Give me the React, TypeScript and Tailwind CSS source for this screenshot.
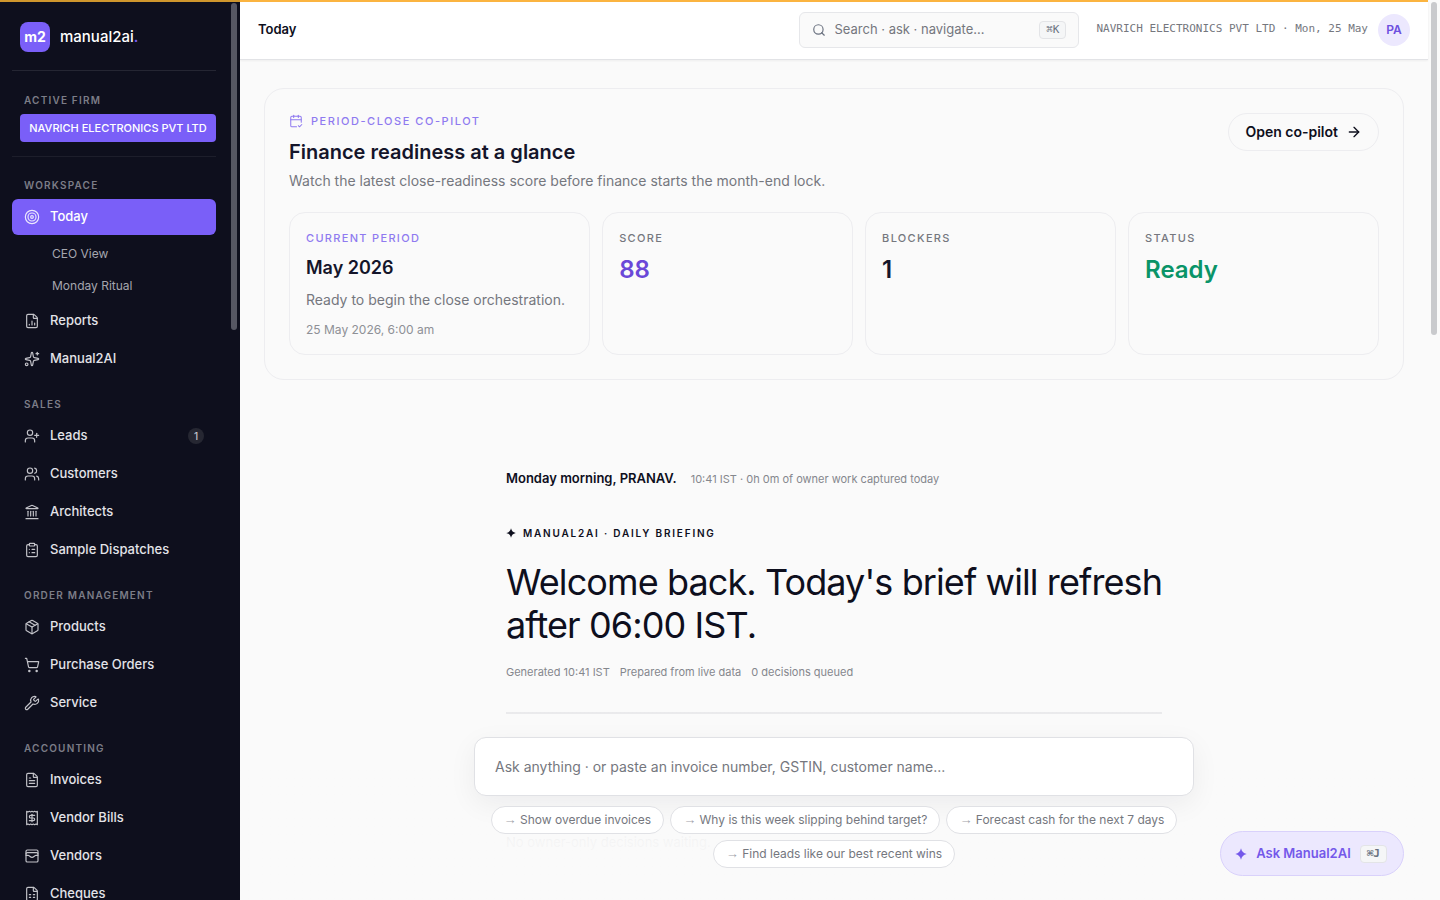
import { type ReactNode } from 'react';
import {
  ArrowRight,
  CalendarCheck2,
  ClipboardList,
  FileChartColumn,
  FileSpreadsheet,
  FileText,
  Landmark,
  Package,
  Receipt,
  Search,
  ShoppingCart,
  Sparkles,
  Target,
  UserPlus,
  Users,
  WalletCards,
  Wrench,
  type LucideIcon,
} from 'lucide-react';

type NavItem = {
  label: string;
  icon: LucideIcon;
  active?: boolean;
  badge?: number;
  children?: string[];
};

const NAV: { title: string; items: NavItem[] }[] = [
  {
    title: 'Workspace',
    items: [
      { label: 'Today', icon: Target, active: true, children: ['CEO View', 'Monday Ritual'] },
      { label: 'Reports', icon: FileChartColumn },
      { label: 'Manual2AI', icon: Sparkles },
    ],
  },
  {
    title: 'Sales',
    items: [
      { label: 'Leads', icon: UserPlus, badge: 1 },
      { label: 'Customers', icon: Users },
      { label: 'Architects', icon: Landmark },
      { label: 'Sample Dispatches', icon: ClipboardList },
    ],
  },
  {
    title: 'Order management',
    items: [
      { label: 'Products', icon: Package },
      { label: 'Purchase Orders', icon: ShoppingCart },
      { label: 'Service', icon: Wrench },
    ],
  },
  {
    title: 'Accounting',
    items: [
      { label: 'Invoices', icon: FileText },
      { label: 'Vendor Bills', icon: Receipt },
      { label: 'Vendors', icon: WalletCards },
      { label: 'Cheques', icon: FileSpreadsheet },
    ],
  },
];

const SUGGESTIONS = [
  'Show overdue invoices',
  'Why is this week slipping behind target?',
  'Forecast cash for the next 7 days',
  'Find leads like our best recent wins',
];

function Spark({ className }: { className?: string }) {
  return (
    <svg viewBox="0 0 12 12" fill="currentColor" className={className}>
      <path d="M6 0.300C6.800 3.600 8.400 5.200 11.700 6C8.400 6.800 6.800 8.400 6 11.700C5.200 8.400 3.600 6.800 0.300 6C3.600 5.200 5.200 3.600 6 0.300Z" />
    </svg>
  );
}

function Kbd({ children }: { children: ReactNode }) {
  return (
    <kbd className="rounded border border-[#e3e4e7] bg-[#f5f6f7] px-1.5 font-['DejaVu_Sans_Mono',monospace] text-[11px] leading-4 text-[#6b7280]">
      {children}
    </kbd>
  );
}

function NavLink({ item }: { item: NavItem }) {
  const Icon = item.icon;
  return (
    <li>
      <a
        href="#"
        className={`flex h-9 items-center gap-2.5 rounded-md px-3 text-[13px] font-medium ${
          item.active ? 'bg-[#7a5ff8] text-white' : 'text-[#e3e3e8]'
        }`}
      >
        <Icon className="size-4 shrink-0 opacity-85" strokeWidth={1.75} />
        {item.label}
        {item.badge && (
          <span className="ml-auto flex size-4 items-center justify-center rounded-full bg-[#262732] text-[10px] text-[#c4c4cc]">
            {item.badge}
          </span>
        )}
      </a>
      {item.children && (
        <ul className="mt-1 flex flex-col gap-0.5">
          {item.children.map((child) => (
            <li key={child}>
              <a href="#" className="flex h-[30px] items-center pl-10 text-xs text-[#a5a6ae]">
                {child}
              </a>
            </li>
          ))}
        </ul>
      )}
    </li>
  );
}

function Sidebar() {
  return (
    <aside className="flex w-60 shrink-0 overflow-hidden bg-[#0e0f1d] pl-3">
      <div className="min-w-0 flex-1 pr-3">
        <div className="flex items-center gap-2.5 border-b border-[#252633] px-2 pt-[22px] pb-[18px]">
          <span className="flex size-[30px] items-center justify-center rounded-lg bg-[#7a5ff8] text-sm font-bold text-white">
            m2
          </span>
          <span className="text-[15px] leading-5 font-medium text-white">
            manual2ai<span className="text-[#7a5ff8]">.</span>
          </span>
        </div>
        <div className="border-b border-[#1d1e2b] pt-[22px] pb-3.5">
          <p className="mb-[7px] px-3 text-[10px] leading-3.5 font-semibold tracking-[0.12em] text-[#7c7d87] uppercase">
            Active firm
          </p>
          <button className="ml-2 block h-7 w-49 rounded bg-[#7a5ff8] text-[11px] font-medium whitespace-nowrap text-white">
            NAVRICH ELECTRONICS PVT LTD
          </button>
        </div>
        <nav className="flex flex-col gap-5 pt-[21px]">
          {NAV.map((group) => (
            <section key={group.title}>
              <h2 className="mb-[7px] px-3 text-[10px] leading-3.5 font-semibold tracking-[0.12em] text-[#7c7d87] uppercase">
                {group.title}
              </h2>
              <ul className="flex flex-col gap-0.5">
                {group.items.map((item) => (
                  <NavLink key={item.label} item={item} />
                ))}
              </ul>
            </section>
          ))}
        </nav>
      </div>
      <div className="w-3 px-[3px] pt-[3px]">
        <div className="h-[327px] rounded-full bg-[#565763]" />
      </div>
    </aside>
  );
}

function TopBar() {
  return (
    <header className="flex h-15 shrink-0 items-center border-b border-[#e2e3e6] bg-white px-[18px] shadow-xs">
      <h1 className="text-[13px] font-semibold text-[#0e0f1d]">Today</h1>
      <label className="ml-auto flex h-9 w-70 items-center gap-2 rounded-md border border-[#e6e7ea] bg-[#fafafa] px-3">
        <Search className="size-3.5 text-[#6b7280]" />
        <input
          type="text"
          aria-label="Search"
          placeholder="Search · ask · navigate…"
          className="min-w-0 flex-1 text-[13px] outline-none placeholder:text-[#75777e]"
        />
        <Kbd>⌘K</Kbd>
      </label>
      <span className="ml-[17px] font-['DejaVu_Sans_Mono',monospace] text-[11px] text-[#75777e]">
        NAVRICH ELECTRONICS PVT LTD · Mon, 25 May
      </span>
      <button className="ml-2.5 size-8 rounded-full bg-[#ece8fe] text-xs font-semibold text-[#6d4fe0]">
        PA
      </button>
    </header>
  );
}

function StatCard({ label, value, color }: { label: string; value: string; color: string }) {
  return (
    <div className="rounded-2xl border border-[#ededf0] p-4">
      <p className="text-[11px] leading-[18px] font-medium tracking-[0.12em] text-[#75777e] uppercase">{label}</p>
      <p className={`mt-[7px] text-2xl font-semibold ${color}`}>{value}</p>
    </div>
  );
}

function Readiness() {
  return (
    <section className="rounded-[20px] border border-[#ededf0] p-6">
      <div className="flex items-start justify-between">
        <div>
          <p className="flex items-center gap-2 text-[11px] leading-4 font-medium tracking-[0.14em] text-[#8f7af0] uppercase">
            <CalendarCheck2 className="size-3.5" strokeWidth={1.75} />
            Period-close co-pilot
          </p>
          <h2 className="mt-2 text-xl leading-[30px] font-semibold text-[#14152a]">
            Finance readiness at a glance
          </h2>
          <p className="mt-1 text-sm text-[#75777e]">
            Watch the latest close-readiness score before finance starts the month-end lock.
          </p>
        </div>
        <a
          href="#"
          className="flex h-[38px] items-center gap-2 rounded-full border border-[#ededf0] px-4 text-sm font-semibold text-[#0e0f1d]"
        >
          Open co-pilot
          <ArrowRight className="size-4" />
        </a>
      </div>
      <div className="mt-[21px] grid grid-cols-[1.2fr_1fr_1fr_1fr] gap-3">
        <div className="rounded-2xl border border-[#ededf0] px-4 pt-4 pb-[15px]">
          <p className="text-[11px] leading-[18px] font-medium tracking-[0.12em] text-[#8f7af0] uppercase">
            Current period
          </p>
          <p className="mt-2 text-lg leading-[26px] font-semibold text-[#14152a]">May 2026</p>
          <p className="mt-2 text-sm leading-[22px] text-[#75777e]">Ready to begin the close orchestration.</p>
          <p className="mt-2.5 text-xs leading-[18px] text-[#8e9096]">25 May 2026, 6:00 am</p>
        </div>
        <StatCard label="Score" value="88" color="text-[#6a48d8]" />
        <StatCard label="Blockers" value="1" color="text-[#14152a]" />
        <StatCard label="Status" value="Ready" color="text-[#0a9468]" />
      </div>
    </section>
  );
}

function Briefing() {
  return (
    <article className="mx-auto mt-[87px] max-w-[656px]">
      <p className="flex items-baseline gap-3.5 text-[#0e0f1d]">
        <span className="text-[13px] leading-[22px] font-semibold">Monday morning, PRANAV.</span>
        <span className="text-[11px] text-[#85878d]">10:41 IST · 0h 0m of owner work captured today</span>
      </p>
      <p className="mt-9 flex items-center gap-[7px] text-[10px] leading-4 font-semibold tracking-[0.18em] text-[#0e0f1d] uppercase">
        <Spark className="size-2.5" />
        Manual2AI · Daily briefing
      </p>
      <h2 className="-mr-2 mt-5 text-4xl leading-[43px] tracking-tight text-[#0e0f1d]">
        Welcome back. Today's brief will refresh after 06:00 IST.
      </h2>
      <p className="mt-4 flex gap-2.5 text-[11px] leading-[18px] text-[#85878d]">
        <span>Generated 10:41 IST</span>
        <span>Prepared from live data</span>
        <span>0 decisions queued</span>
      </p>
      <hr className="mt-[31px] border-t-2 border-[#e9e9eb]" />
      <p className="mt-[118px] text-[13px] leading-5 text-[#75777e]">No owner-only decisions waiting.</p>
    </article>
  );
}

function Composer() {
  return (
    <div className="absolute inset-x-0 bottom-0 bg-linear-to-b from-transparent to-[#fafafa]/96 to-70% px-6 pt-8 pb-8">
      <form className="mx-auto max-w-[720px]">
        <input
          type="text"
          aria-label="Ask anything"
          placeholder="Ask anything · or paste an invoice number, GSTIN, customer name..."
          className="h-[59px] w-full rounded-xl border border-[#e0e1e5] bg-white px-5 text-sm shadow-[0_8px_28px_rgba(14,15,29,0.06)] outline-none placeholder:text-[#75777e]"
        />
        <div className="mt-2.5 flex flex-wrap justify-center gap-1.5">
          {SUGGESTIONS.map((text) => (
            <button
              key={text}
              type="button"
              className="h-7 rounded-full border border-[#e0e1e5] bg-white px-3 text-xs text-[#75777e]"
            >
              <span className="font-['Liberation_Sans',sans-serif] text-[13px] leading-4 text-[#a3a4ab]">→</span>{' '}
              {text}
            </button>
          ))}
        </div>
      </form>
    </div>
  );
}

export default function App() {
  return (
    <div className="relative flex h-screen overflow-hidden bg-[#fafafa] font-[Inter,sans-serif]">
      <Sidebar />
      <div className="relative flex min-w-0 flex-1 flex-col">
        <TopBar />
        <main className="min-h-0 flex-1 overflow-hidden px-6 pt-7">
          <Readiness />
          <Briefing />
        </main>
        <Composer />
        <button className="absolute right-6 bottom-6 flex h-[45px] items-center gap-[9px] rounded-full border border-[#d9d1fb] bg-[#ece8fe] pr-4 pl-3.5 text-[13px] font-semibold text-[#7458ea]">
          <Spark className="size-3" />
          Ask Manual2AI
          <Kbd>⌘J</Kbd>
        </button>
      </div>
      <div className="w-3 px-[3px] pt-0.5">
        <div className="h-[333px] rounded-full bg-[#c9cacd]" />
      </div>
      <div className="absolute top-0 right-3 left-0 flex h-0.5">
        <div className="w-60 bg-[#cf962d]" />
        <div className="flex-1 bg-[#fbb440]" />
      </div>
    </div>
  );
}
